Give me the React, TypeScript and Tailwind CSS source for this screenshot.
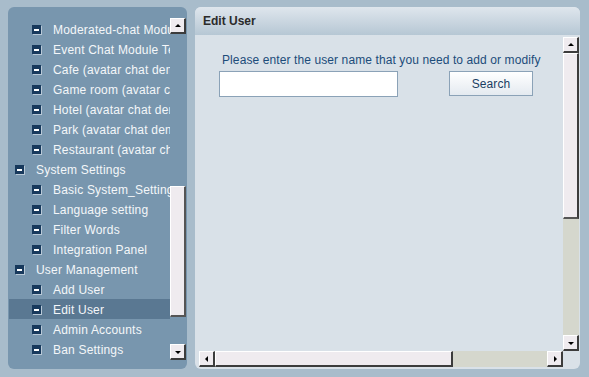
import React from "react";

type Item = { label: string; level: 0 | 1; active?: boolean };

const items: Item[] = [
  { label: "Moderated-chat Module", level: 1 },
  { label: "Event Chat Module Test", level: 1 },
  { label: "Cafe (avatar chat demo)", level: 1 },
  { label: "Game room (avatar chat demo)", level: 1 },
  { label: "Hotel (avatar chat demo)", level: 1 },
  { label: "Park (avatar chat demo)", level: 1 },
  { label: "Restaurant (avatar chat demo)", level: 1 },
  { label: "System Settings", level: 0 },
  { label: "Basic System_Settings", level: 1 },
  { label: "Language setting", level: 1 },
  { label: "Filter Words", level: 1 },
  { label: "Integration Panel", level: 1 },
  { label: "User Management", level: 0 },
  { label: "Add User", level: 1 },
  { label: "Edit User", level: 1, active: true },
  { label: "Admin Accounts", level: 1 },
  { label: "Ban Settings", level: 1 },
];

function MinusIcon() {
  return (
    <span className="flex h-[9px] w-[9px] shrink-0 items-center justify-center bg-[#17395c] shadow-[1px_1px_0_#b8c8d6]">
      <span className="h-[2px] w-[5px] bg-white" />
    </span>
  );
}

function Arrow({ dir }: { dir: "up" | "down" | "left" | "right" }) {
  const pts =
    dir === "up"
      ? "1,5 4,2 7,5"
      : dir === "down"
      ? "1,3 4,6 7,3"
      : dir === "left"
      ? "5,1 2,4 5,7"
      : "3,1 6,4 3,7";
  return (
    <svg width="8" height="8" viewBox="0 0 8 8">
      <polygon points={pts} fill="#000" />
    </svg>
  );
}

function SButton({ dir }: { dir: "up" | "down" | "left" | "right" }) {
  return (
    <div className="flex h-[16px] w-[16px] shrink-0 items-center justify-center border-t border-l border-t-white border-l-white border-r-2 border-b-2 border-r-[#3c3c3c] border-b-[#3c3c3c] bg-[#efebef]">
      <Arrow dir={dir} />
    </div>
  );
}

export default function App() {
  return (
    <div
      className="flex h-[377px] w-[589px] gap-[8px] bg-[#a8bccb] pl-[8px] pt-[7px]"
      style={{ fontFamily: '"Liberation Sans", Arial, sans-serif' }}
    >
      {/* Left panel */}
      <div className="flex h-[362px] w-[179px] overflow-hidden rounded-[6px] bg-[#7896ae]">
        <div className="flex w-[162px] flex-col overflow-hidden pl-[1px] pt-[12px]">
          {items.map((it) => (
            <div
              key={it.label}
              className={`flex h-[20px] shrink-0 items-center whitespace-nowrap pt-[1px] text-[12px] tracking-[0.2px] text-[#f4f6f9] ${
                it.active ? "bg-[#5a7892]" : ""
              } ${it.level === 0 ? "pl-[6px]" : "pl-[23px]"}`}
            >
              <MinusIcon />
              <span className="ml-[12px] leading-none">{it.label}</span>
            </div>
          ))}
        </div>
        <div className="mt-[11px] mb-[9px] flex w-[16px] flex-col">
          <SButton dir="up" />
          <div className="flex-1 pt-[152px] pb-[27px]">
            <div className="h-full border-t border-l border-t-white border-l-white border-r-2 border-b-2 border-r-[#555] border-b-[#555] bg-[#efebef]" />
          </div>
          <SButton dir="down" />
        </div>
      </div>

      {/* Right panel */}
      <div className="flex h-[362px] w-[385px] flex-col overflow-hidden rounded-[6px] bg-[#d9e1e8]">
        <div className="flex h-[28px] shrink-0 items-center bg-gradient-to-b from-[#dfe6ed] to-[#b6c7d4] pl-[8px] text-[12px] font-bold text-[#2b2b2b]">
          Edit User
        </div>
        <div className="ml-[4px] mt-[2px] flex w-[380px] flex-col">
          <div className="flex h-[314px]">
            <div className="relative flex-1 overflow-hidden">
              <div className="pl-[23px] pt-[17px] text-[12px] leading-none tracking-[0.1px] text-[#1c4c7a]">
                Please enter the user name that you need to add or modify
              </div>
              <div className="mt-[5px] flex items-start pl-[20px]">
                <div className="h-[26px] w-[179px] border border-[#8ba2b7] bg-white" />
                <div className="ml-[51px] flex h-[25px] w-[84px] items-center justify-center border border-[#8ba2b7] bg-gradient-to-b from-white to-[#e4eaf0] text-[12px] tracking-[0.1px] text-[#1a3e62]">
                  Search
                </div>
              </div>
            </div>
            <div className="flex w-[16px] flex-col bg-[#d5d7cd]">
              <SButton dir="up" />
              <div className="h-[166px] border-t border-l border-t-white border-l-white border-r-2 border-b-2 border-r-[#3c3c3c] border-b-[#555] bg-[#efebef]" />
              <div className="flex-1" />
              <SButton dir="down" />
            </div>
          </div>
          <div className="flex h-[16px]">
            <div className="flex w-[364px] bg-[#d5d7cd]">
              <SButton dir="left" />
              <div className="h-[16px] w-[238px] border-t border-l border-t-white border-l-white border-r-2 border-b-2 border-r-[#3c3c3c] border-b-[#3c3c3c] bg-[#efebef]" />
              <div className="flex-1" />
              <SButton dir="right" />
            </div>
          </div>
        </div>
      </div>
    </div>
  );
}
